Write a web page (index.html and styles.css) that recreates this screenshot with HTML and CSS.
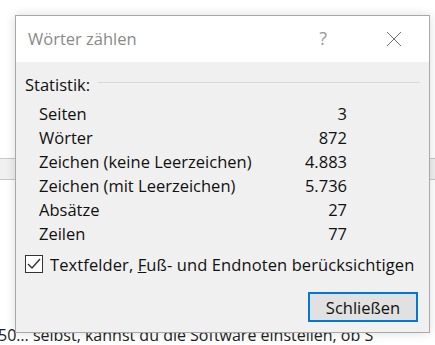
FILE: index.html
```html
<!DOCTYPE html>
<html lang="de">
<head>
  <meta charset="UTF-8">
  <title>Wörter zählen</title>
  <link rel="stylesheet" href="styles.css">
</head>
<body>
  <div class="doc">
    <div class="band"></div>
    <p class="doc-text">50… selbst, kannst du die Software einstellen, ob S</p>
  </div>

  <div class="dialog">
    <div class="titlebar">
      <span class="title">Wörter zählen</span>
      <span class="help">?</span>
      <svg class="close" width="16" height="16" viewBox="0 0 16 16">
        <path d="M1 1 L15 15 M15 1 L1 15" stroke="#707070" stroke-width="1" fill="none"/>
      </svg>
    </div>

    <div class="content">
      <div class="group-head">
        <span>Statistik:</span>
        <span class="rule"></span>
      </div>

      <div class="stats">
        <span>Seiten</span><span class="num">3</span>
        <span>Wörter</span><span class="num">872</span>
        <span>Zeichen (keine Leerzeichen)</span><span class="num">4.883</span>
        <span>Zeichen (mit Leerzeichen)</span><span class="num">5.736</span>
        <span>Absätze</span><span class="num">27</span>
        <span>Zeilen</span><span class="num">77</span>
      </div>

      <label class="check">
        <span class="box">
          <svg width="14" height="12" viewBox="0 0 14 12">
            <path d="M1 6 L5 10 L13 1" stroke="#333" stroke-width="1.4" fill="none"/>
          </svg>
        </span>
        <span class="check-text">Textfelder, <u>F</u>uß- und Endnoten berücksichtigen</span>
      </label>

      <div class="actions">
        <button class="btn">Schließen</button>
      </div>
    </div>
  </div>
</body>
</html>
```

FILE: styles.css
```css
body {
  margin: 0;
  background: #fff;
  font-family: "Open Sans", "Noto Sans", sans-serif;
  overflow: hidden;
}

.doc {
  height: 345px;
  display: flex;
  flex-direction: column;
}

.band {
  margin-top: 158px;
  height: 21px;
  background: #f0f0f0;
  border-top: 1px solid #c8c8c8;
  border-bottom: 1px solid #c8c8c8;
}

.doc-text {
  margin: 145px 0 0 -2px;
  font-size: 16px;
  line-height: 20px;
  color: #222;
  white-space: nowrap;
}

.dialog {
  position: absolute;
  left: 15px;
  top: 15px;
  width: 413px;
  height: 316px;
  border: 1px solid #a8a8a8;
  background: #f0f0f0;
  box-shadow: 0 0 10px rgba(0, 0, 0, 0.14);
  display: flex;
  flex-direction: column;
}

.titlebar {
  height: 46px;
  background: #fff;
  display: flex;
  align-items: center;
  padding-left: 12px;
}

.title {
  flex: 1;
  font-size: 16.5px;
  color: #8a8a8a;
  padding-bottom: 2px;
}

.help {
  font-size: 18px;
  color: #9a9a9a;
  margin-right: 59px;
  padding-bottom: 2px;
}

.close {
  margin-right: 27px;
}

.content {
  padding: 11px 9px 0 9px;
  font-size: 16.5px;
  color: #111;
  display: flex;
  flex-direction: column;
}

.group-head {
  display: flex;
  align-items: center;
  gap: 8px;
  height: 22px;
}

.rule {
  flex: 1;
  height: 1px;
  background: #d9d9d9;
  margin-top: -3px;
}

.stats {
  display: grid;
  grid-template-columns: 240px 68px;
  grid-auto-rows: 24px;
  align-items: center;
  margin: 6px 0 0 14px;
}

.num {
  text-align: right;
}

.check {
  display: flex;
  align-items: center;
  gap: 7px;
  margin-top: 8px;
  height: 22px;
}

.check-text {
  letter-spacing: 0.1px;
}

.box {
  width: 16px;
  height: 16px;
  border: 1px solid #333;
  background: #fff;
  display: flex;
  align-items: center;
  justify-content: center;
}

.actions {
  display: flex;
  justify-content: flex-end;
  margin-top: 17px;
  padding-right: 2px;
}

.btn {
  width: 110px;
  height: 30px;
  border: 2px solid #0078d7;
  background: #e1e1e1;
  font-family: inherit;
  font-size: 16.5px;
  color: #111;
  padding: 0;
  box-shadow: inset 0 0 0 1px #e1e1e1;
}
```
